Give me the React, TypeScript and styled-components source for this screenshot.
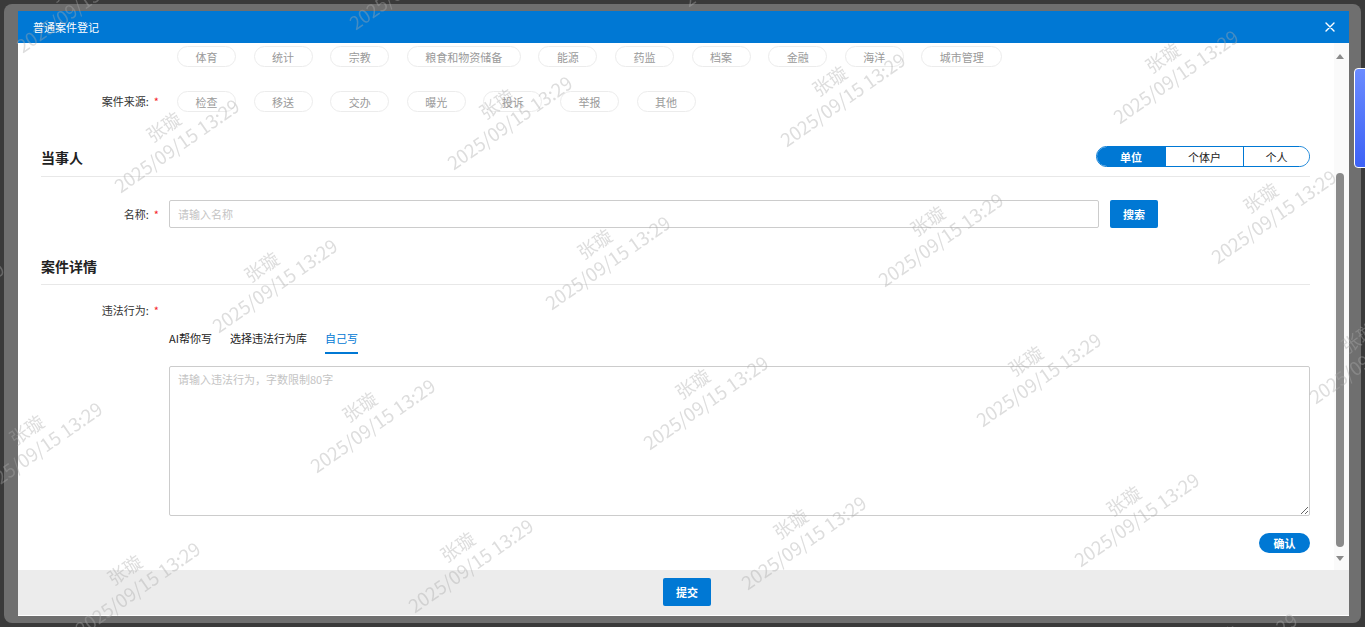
import React, { useLayoutEffect, useRef, useState } from 'react'
import styled, { createGlobalStyle } from 'styled-components'

const BLUE = '#0078d4'
const FONT = `"Noto Sans CJK SC", "Noto Sans", "Liberation Sans", sans-serif`

const hiddenRows = [
  ['公安', '交通', '环保', '住建', '水利', '农业', '文旅', '卫健', '应急', '林业'],
  ['教育', '民政', '司法', '财政', '人社', '自然资源', '商务', '审计', '税务', '气象'],
]
const fieldRow = ['体育', '统计', '宗教', '粮食和物资储备', '能源', '药监', '档案', '金融', '海洋', '城市管理']
const sources = ['检查', '移送', '交办', '曝光', '投诉', '举报', '其他']
const partyTypes = [
  { name: '单位', width: 68 },
  { name: '个体户', width: 78 },
  { name: '个人', width: 66 },
]
const tabs = ['AI帮你写', '选择违法行为库', '自己写']

const GlobalStyle = createGlobalStyle`
  html, body {
    margin: 0;
    padding: 0;
    background: #3a3a3a;
  }
  body {
    font-family: ${FONT};
    font-size: 11px;
    color: #333;
  }
  * {
    box-sizing: border-box;
  }
`

const Screen = styled.div`
  position: relative;
  width: 1365px;
  height: 627px;
  padding: 4px;
  overflow: hidden;
`

const Frame = styled.div`
  display: flex;
  height: 100%;
  background: #6f6f6f;
  border-radius: 8px;
  padding: 7px 12px 7px 14px;
`

const Modal = styled.div`
  flex: 1;
  display: flex;
  flex-direction: column;
  background: #fff;
  padding-bottom: 1px;
  min-width: 0;
`

const Header = styled.div`
  flex: none;
  height: 32px;
  display: flex;
  align-items: center;
  justify-content: space-between;
  padding: 0 12px 0 15px;
  background: ${BLUE};
  color: #fff;
  font-size: 11px;
`

const CloseButton = styled.button`
  display: flex;
  align-items: center;
  justify-content: center;
  width: 14px;
  height: 14px;
  padding: 0;
  border: none;
  background: transparent;
  cursor: pointer;
`

const BodyWrap = styled.div`
  flex: 1;
  min-height: 0;
  display: flex;
`

const Body = styled.div`
  flex: 1;
  min-width: 0;
  overflow-y: auto;
  padding: 0 24px 17px 23px;
  display: flex;
  flex-direction: column;
  scrollbar-width: none;
`

const ScrollRail = styled.div`
  flex: none;
  width: 15px;
  display: flex;
  flex-direction: column;
  background: #fafafa;
`

const Arrow = styled.div<{ $down?: boolean }>`
  flex: none;
  height: 20px;
  position: relative;

  &::before {
    content: '';
    position: absolute;
    left: 2px;
    top: ${p => (p.$down ? 6 : 11)}px;
    border-left: 4px solid transparent;
    border-right: 4px solid transparent;
    ${p => (p.$down ? 'border-top' : 'border-bottom')}: 5px solid #8a8a8a;
  }
`

const Track = styled.div`
  flex: 1;
  position: relative;
`

const Thumb = styled.div`
  position: absolute;
  left: 2px;
  width: 8px;
  border-radius: 4px;
  background: #8a8a8a;
`

const SectionHead = styled.div<{ $gap: number }>`
  flex: none;
  display: flex;
  align-items: center;
  justify-content: space-between;
  margin-top: ${p => p.$gap}px;
  padding-bottom: 9px;
  border-bottom: 1px solid #e8e8e8;
`

const SectionTitle = styled.h3`
  margin: 0;
  font-size: 14px;
  line-height: 18px;
  font-weight: 700;
  color: #222;
`

const Field = styled.div<{ $gap: number }>`
  flex: none;
  display: flex;
  align-items: flex-start;
  margin-top: ${p => p.$gap}px;
`

const Label = styled.label<{ $h: number }>`
  flex: none;
  width: 128px;
  padding-right: 10px;
  display: flex;
  justify-content: flex-end;
  line-height: ${p => p.$h}px;
  font-size: 11px;
  color: #333;
  white-space: nowrap;
`

const Star = styled.span`
  margin-left: 5px;
  color: #f5222d;
`

const TagGrid = styled.div`
  display: flex;
  flex-direction: column;
  gap: 24px;
  padding-left: 8px;
`

const TagRow = styled.div`
  display: flex;
  gap: 17.6px;
`

const Tag = styled.span`
  height: 21px;
  padding: 0 17.5px;
  border: 1px solid #ececec;
  border-radius: 11px;
  display: flex;
  align-items: center;
  font-size: 11px;
  color: #9a9a9a;
  white-space: nowrap;
`

const Segmented = styled.div`
  display: flex;
  height: 21px;
  border: 1px solid ${BLUE};
  border-radius: 11px;
  overflow: hidden;
`

const Segment = styled.button<{ $active: boolean; $w: number }>`
  width: ${p => p.$w}px;
  height: 100%;
  padding: 0;
  border: none;
  border-left: 1px solid ${BLUE};
  background: ${p => (p.$active ? BLUE : '#fff')};
  color: ${p => (p.$active ? '#fff' : '#222')};
  font-family: ${FONT};
  font-size: 11px;
  font-weight: ${p => (p.$active ? 700 : 400)};
  cursor: pointer;

  &:first-child {
    border-left: none;
  }
`

const NameInput = styled.input`
  width: 930px;
  height: 28px;
  padding: 0 8px;
  border: 1px solid #cccccc;
  border-radius: 2px;
  font-family: ${FONT};
  font-size: 11px;
  outline: none;

  &::placeholder {
    color: #c4c4c4;
  }
`

const BlueButton = styled.button<{ $w: number; $h: number; $round?: boolean }>`
  flex: none;
  width: ${p => p.$w}px;
  height: ${p => p.$h}px;
  padding: 0;
  border: none;
  border-radius: ${p => (p.$round ? p.$h / 2 : 2)}px;
  background: ${BLUE};
  color: #fff;
  font-family: ${FONT};
  font-size: 11px;
  font-weight: 700;
  cursor: pointer;
`

const SearchButton = styled(BlueButton)`
  margin-left: 11px;
`

const Detail = styled.div`
  flex: none;
  display: flex;
  flex-direction: column;
  padding-left: 128px;
`

const Tabs = styled.div`
  display: flex;
  gap: 18px;
  margin-top: 10px;
`

const Tab = styled.span<{ $active: boolean }>`
  line-height: 18px;
  padding-bottom: 5px;
  border-bottom: 2px solid ${p => (p.$active ? BLUE : 'transparent')};
  color: ${p => (p.$active ? BLUE : '#222')};
  font-size: 11px;
  cursor: pointer;
`

const TextArea = styled.textarea`
  margin-top: 12px;
  width: 100%;
  height: 150px;
  padding: 4px 8px;
  border: 1px solid #cccccc;
  border-radius: 2px;
  font-family: ${FONT};
  font-size: 11px;
  resize: vertical;
  outline: none;

  &::placeholder {
    color: #c4c4c4;
  }
`

const ConfirmButton = styled(BlueButton)`
  align-self: flex-end;
  margin-top: 17px;
`

const Footer = styled.div`
  flex: none;
  height: 45px;
  display: flex;
  justify-content: center;
  align-items: flex-start;
  padding: 8px 0 0 7px;
  background: #ececec;
`

const SideTab = styled.div`
  position: absolute;
  top: 68px;
  right: -10px;
  width: 21px;
  height: 100px;
  border: 1px solid #fff;
  border-radius: 4px;
  background: linear-gradient(180deg, #6a8bff 0%, #3d62f6 100%);
`

const WatermarkLayer = styled.div`
  position: fixed;
  inset: 0;
  pointer-events: none;
  overflow: hidden;
  z-index: 10;
`

const Watermark = styled.div`
  position: absolute;
  transform: translate(-50%, -50%) rotate(-35deg);
  text-align: center;
  white-space: nowrap;
  font-family: ${FONT};
  font-size: 18.5px;
  line-height: 23px;
  color: rgba(170, 170, 170, 0.4);
`

const marks: { x: number; y: number }[] = []
for (let r = -1; r <= 4; r++) {
  for (let c = -1; c <= 4; c++) {
    const x = 170 + 333 * c + 98 * r
    const y = 136 - 23 * c + 140 * r
    if (x > -160 && x < 1530 && y > -110 && y < 740) marks.push({ x, y })
  }
}

const App: React.FC = () => {
  const bodyRef = useRef<HTMLDivElement>(null)
  const trackRef = useRef<HTMLDivElement>(null)
  const [thumb, setThumb] = useState({ top: 0, height: 0 })

  const syncThumb = () => {
    const el = bodyRef.current
    const track = trackRef.current
    if (!el || !track) return
    const h = track.clientHeight
    setThumb({
      top: (h * el.scrollTop) / el.scrollHeight + 3,
      height: (h * el.clientHeight) / el.scrollHeight - 6,
    })
  }

  // the form is shown scrolled to the bottom
  useLayoutEffect(() => {
    const el = bodyRef.current
    if (el) el.scrollTop = el.scrollHeight
    syncThumb()
  }, [])

  return (
    <Screen>
      <GlobalStyle />
      <Frame>
        <Modal>
          <Header>
            <span>普通案件登记</span>
            <CloseButton aria-label="关闭">
              <svg width="10" height="10" viewBox="0 0 10 10">
                <path d="M1 1L9 9M9 1L1 9" stroke="#fff" strokeWidth="1.4" strokeLinecap="round" />
              </svg>
            </CloseButton>
          </Header>

          <BodyWrap>
            <Body ref={bodyRef} onScroll={syncThumb}>
              <SectionHead $gap={10}>
                <SectionTitle>案件信息</SectionTitle>
              </SectionHead>
              <Field $gap={23}>
                <Label $h={21}>
                  所属领域:<Star>*</Star>
                </Label>
                <TagGrid>
                  {hiddenRows.map((row, i) => (
                    <TagRow key={i}>
                      {row.map(t => <Tag key={t}>{t}</Tag>)}
                    </TagRow>
                  ))}
                  <TagRow>
                    {fieldRow.map(t => <Tag key={t}>{t}</Tag>)}
                  </TagRow>
                </TagGrid>
              </Field>

              <Field $gap={24}>
                <Label $h={21}>
                  案件来源:<Star>*</Star>
                </Label>
                <TagGrid>
                  <TagRow>
                    {sources.map(t => <Tag key={t}>{t}</Tag>)}
                  </TagRow>
                </TagGrid>
              </Field>

              <SectionHead $gap={34}>
                <SectionTitle>当事人</SectionTitle>
                <Segmented>
                  {partyTypes.map((p, i) => (
                    <Segment key={p.name} $active={i === 0} $w={p.width}>{p.name}</Segment>
                  ))}
                </Segmented>
              </SectionHead>

              <Field $gap={23}>
                <Label $h={28}>
                  名称:<Star>*</Star>
                </Label>
                <NameInput placeholder="请输入名称" />
                <SearchButton $w={48} $h={28}>搜索</SearchButton>
              </Field>

              <SectionHead $gap={29}>
                <SectionTitle>案件详情</SectionTitle>
              </SectionHead>

              <Field $gap={16}>
                <Label $h={18}>
                  违法行为:<Star>*</Star>
                </Label>
              </Field>
              <Detail>
                <Tabs>
                  {tabs.map((t, i) => (
                    <Tab key={t} $active={i === 2}>{t}</Tab>
                  ))}
                </Tabs>
                <TextArea placeholder="请输入违法行为，字数限制80字" />
                <ConfirmButton $w={51} $h={20} $round>确认</ConfirmButton>
              </Detail>
            </Body>
            <ScrollRail>
              <Arrow />
              <Track ref={trackRef}>
                <Thumb style={{ top: thumb.top, height: thumb.height }} />
              </Track>
              <Arrow $down />
            </ScrollRail>
          </BodyWrap>

          <Footer>
            <BlueButton $w={48} $h={28}>提交</BlueButton>
          </Footer>
        </Modal>
      </Frame>
      <SideTab />
      <WatermarkLayer>
        {marks.map((m, i) => (
          <Watermark key={i} style={{ left: m.x, top: m.y }}>
            张璇
            <br />
            2025/09/15 13:29
          </Watermark>
        ))}
      </WatermarkLayer>
    </Screen>
  )
}

export default App
